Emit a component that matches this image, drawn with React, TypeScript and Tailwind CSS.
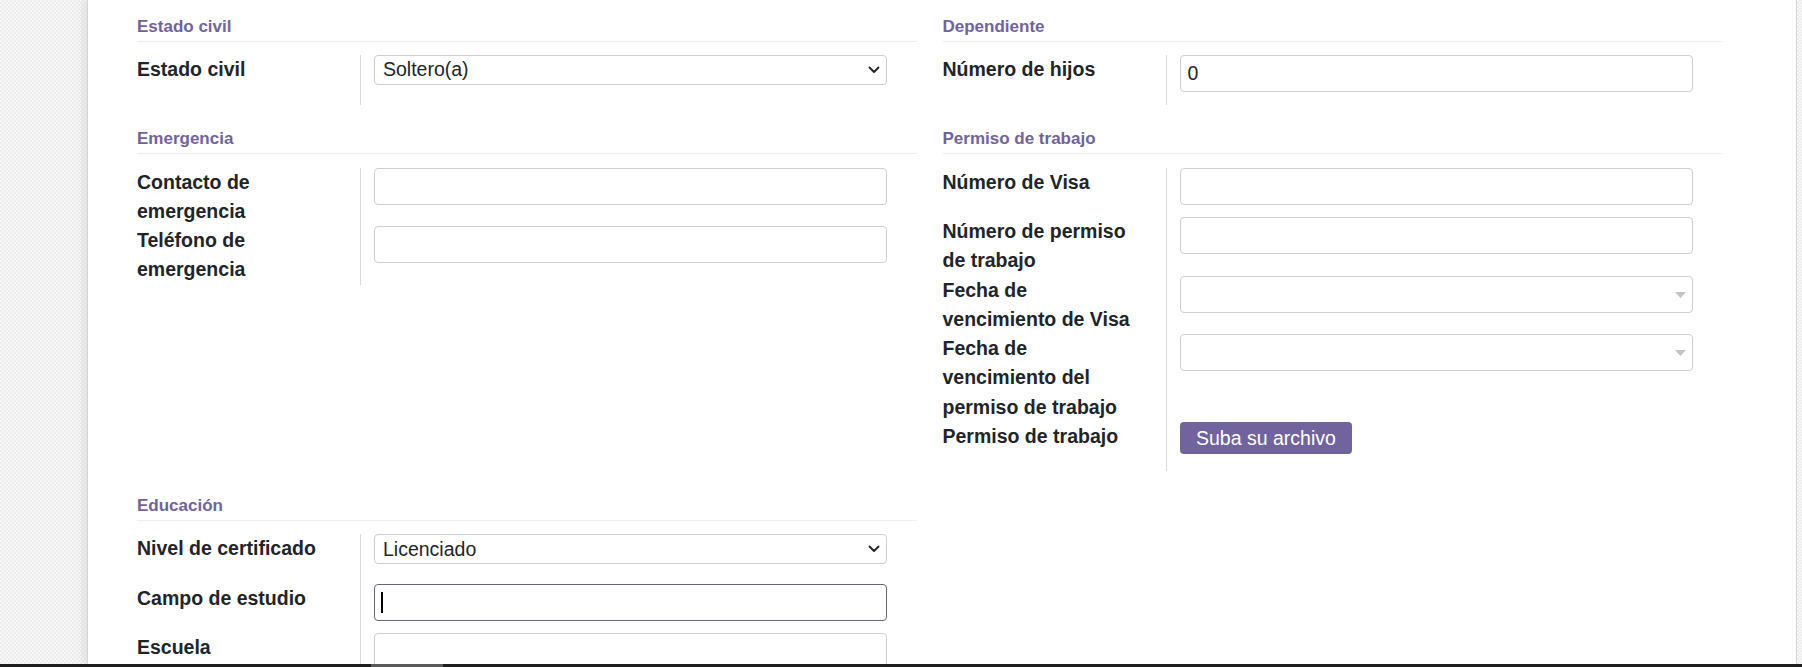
import type { ReactNode } from "react";

const Label = ({ children }: { children: ReactNode }) => (
  <div className="pr-[27px] text-[19.5px] font-bold leading-[29.25px] text-[#212529]">
    {children}
  </div>
);

const Row = ({ label, children }: { label: ReactNode; children: ReactNode }) => (
  <div className="grid grid-cols-[223px_1fr]">
    <Label>{label}</Label>
    <div className="min-h-[49.5px] border-l border-[#dadada] pl-[13px] pr-[29.5px]">
      {children}
    </div>
  </div>
);

const TextInput = ({ value = "" }: { value?: string }) => (
  <input
    readOnly
    value={value}
    className="block h-[37px] w-full rounded-[4px] border border-[#cfcfcf] bg-white px-[7px] text-[19.5px] text-[#212529] outline-none"
  />
);

const FocusedInput = () => (
  <div className="relative">
    <input
      readOnly
      className="block h-[37.5px] w-full rounded-[4px] border border-[#66657f] bg-white px-[7px] text-[19.5px] outline-none"
    />
    <span className="absolute left-[7px] top-[8px] h-[21px] w-[1.5px] bg-black" />
  </div>
);

const DateInput = () => (
  <div className="relative">
    <input
      readOnly
      className="block h-[37px] w-full rounded-[4px] border border-[#cfcfcf] bg-white px-[7px] text-[19.5px] outline-none"
    />
    <svg
      className="absolute right-[7px] top-[16px]"
      width="11"
      height="6"
      viewBox="0 0 11 6"
    >
      <path d="M0 0h11L5.5 6z" fill="#c4c4c4" />
    </svg>
  </div>
);

const Select = ({ value }: { value: string }) => (
  <div className="relative">
    <select className="block h-[29.5px] w-full appearance-none rounded-[4px] border border-[#cfcfcf] bg-white pl-[8px] pr-[24px] text-[19.5px] leading-[27px] text-[#212529] outline-none">
      <option>{value}</option>
    </select>
    <svg
      className="pointer-events-none absolute right-[7px] top-[11px]"
      width="12"
      height="8"
      viewBox="0 0 12 8"
    >
      <path
        d="M1.5 1.5 6 6l4.5-4.5"
        fill="none"
        stroke="#222"
        strokeWidth="1.8"
        strokeLinecap="round"
        strokeLinejoin="round"
      />
    </svg>
  </div>
);

const Group = ({ title, children }: { title: string; children?: ReactNode }) => (
  <div>
    <div className="border-b border-[#efefef] pb-[1.5px] text-[17px] font-bold leading-[25.5px] text-[#71639e]">
      {title}
    </div>
    <div className="mt-[13.5px]">{children}</div>
  </div>
);

export default function App() {
  return (
    <div className="flex h-[667px] flex-col overflow-hidden font-['Liberation_Sans',Arial,sans-serif]">
      <div className="flex min-h-0 flex-1">
        <div className="w-[87px] shrink-0 bg-[image:repeating-conic-gradient(#ececec_0%_25%,#f7f7f7_0%_50%)] bg-[length:4px_4px]" />
        <main className="min-w-0 flex-1 overflow-hidden border-l border-[#d6d6d6] bg-white pl-[49px] pr-[74px] pt-[13.5px] shadow-[-5px_0_6px_rgba(0,0,0,0.06)]">
          <div className="flex flex-col gap-[21.5px]">
            <div className="grid grid-cols-2 gap-x-[26px]">
              <Group title="Estado civil">
                <Row label="Estado civil">
                  <Select value="Soltero(a)" />
                </Row>
              </Group>
              <Group title="Dependiente">
                <Row label="Número de hijos">
                  <TextInput value="0" />
                </Row>
              </Group>
            </div>

            <div className="grid grid-cols-2 gap-x-[26px]">
              <Group title="Emergencia">
                <Row label="Contacto de emergencia">
                  <TextInput />
                </Row>
                <Row label="Teléfono de emergencia">
                  <TextInput />
                </Row>
              </Group>
              <Group title="Permiso de trabajo">
                <Row label="Número de Visa">
                  <TextInput />
                </Row>
                <Row label="Número de permiso de trabajo">
                  <TextInput />
                </Row>
                <Row label="Fecha de vencimiento de Visa">
                  <DateInput />
                </Row>
                <Row label="Fecha de vencimiento del permiso de trabajo">
                  <DateInput />
                </Row>
                <Row label="Permiso de trabajo">
                  <button className="h-[32px] rounded-[4px] bg-[#71639e] px-[16.5px] text-[19.5px] leading-[32px] text-white">
                    Suba su archivo
                  </button>
                </Row>
              </Group>
            </div>

            <div className="grid grid-cols-2 gap-x-[26px]">
              <Group title="Educación">
                <Row label="Nivel de certificado">
                  <Select value="Licenciado" />
                </Row>
                <Row label="Campo de estudio">
                  <FocusedInput />
                </Row>
                <Row label="Escuela">
                  <TextInput />
                </Row>
              </Group>
              <div />
            </div>
          </div>
        </main>
        <div className="w-[6px] shrink-0 border-l border-[#d6d6d6] bg-[image:repeating-conic-gradient(#ececec_0%_25%,#f7f7f7_0%_50%)] bg-[length:4px_4px]" />
      </div>
      <div className="flex h-[3px] shrink-0 bg-[#1e1e1e]">
        <div className="ml-[371px] w-[72px] bg-[#5a5a5a]" />
      </div>
    </div>
  );
}
